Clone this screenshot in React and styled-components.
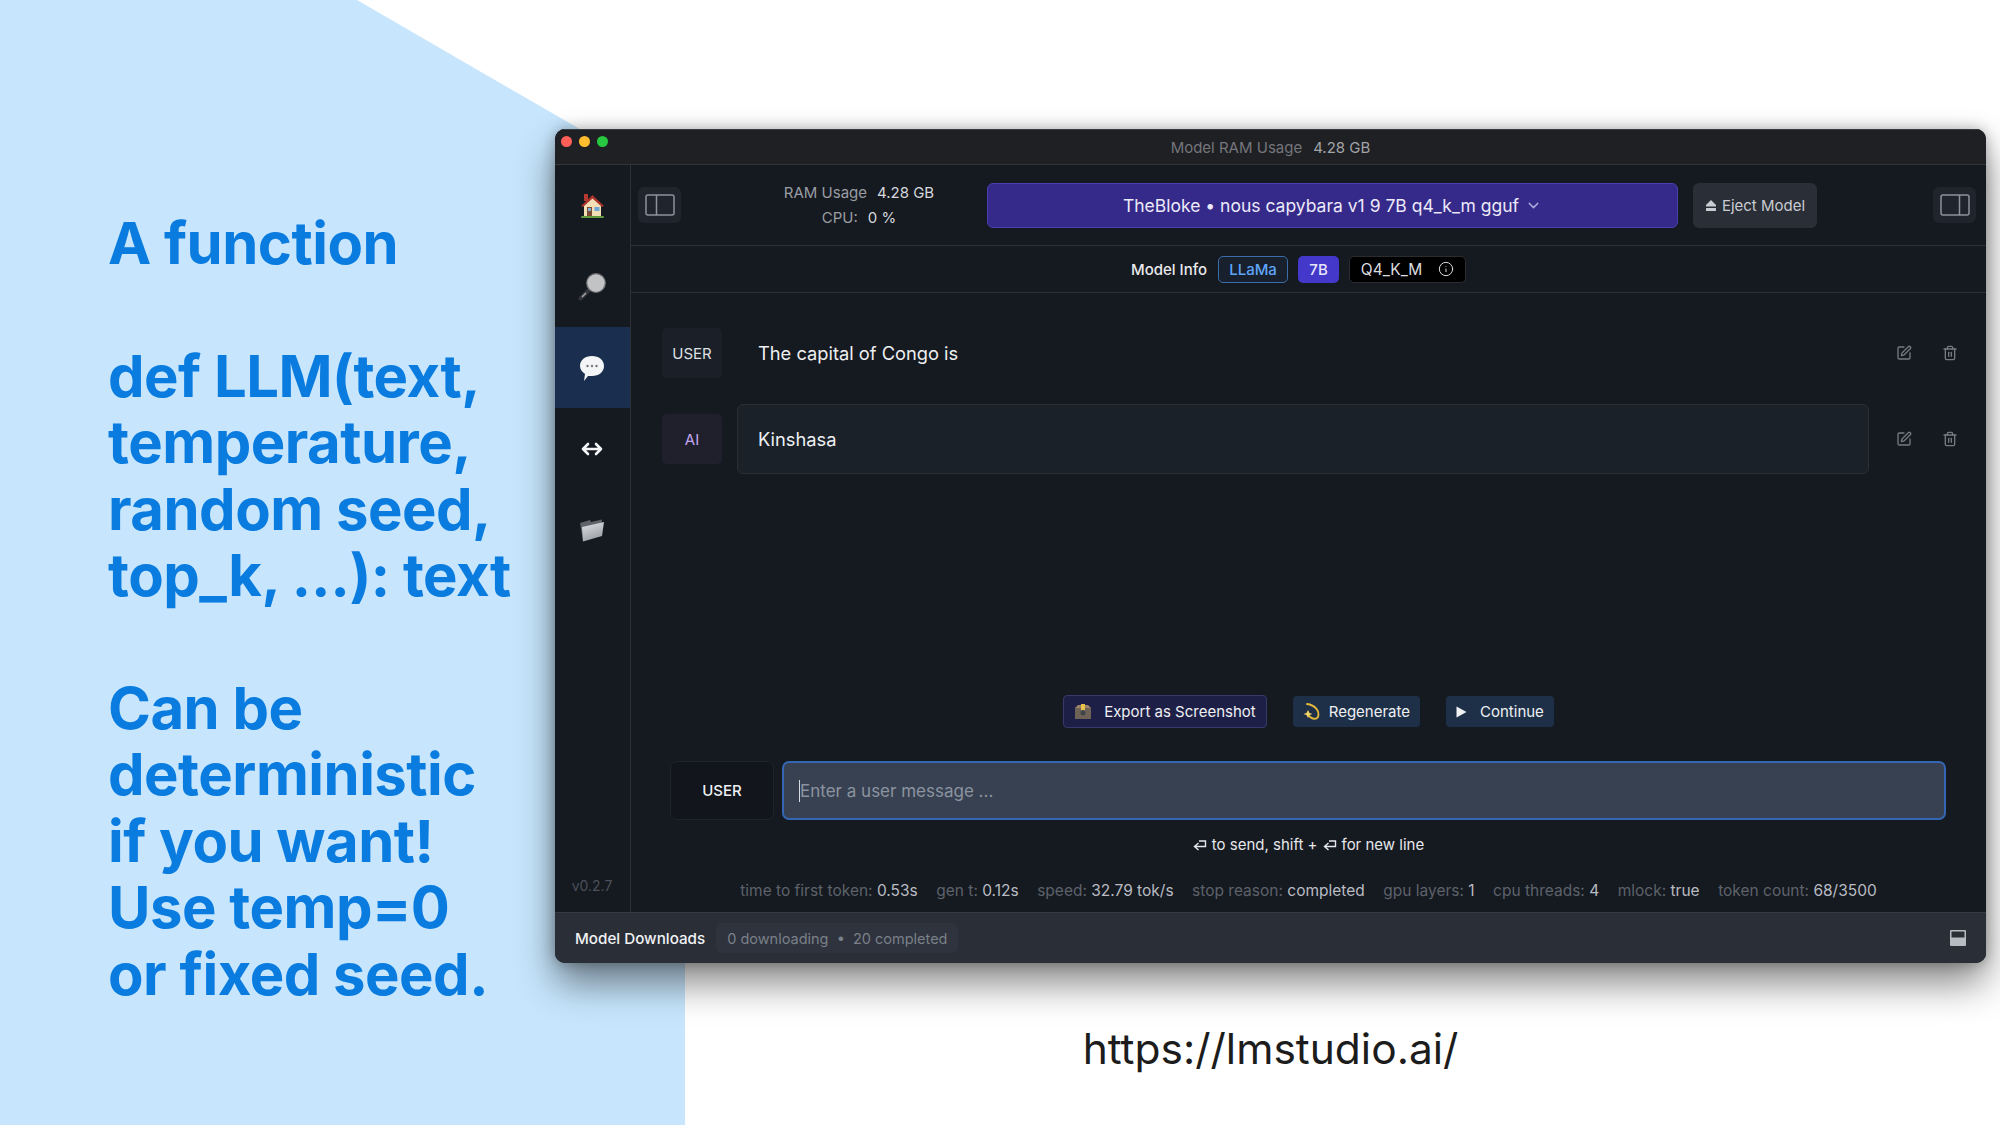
import React from 'react'
import styled, { createGlobalStyle } from 'styled-components'
import { ChevronDown, Info, SquarePen, Trash2 } from 'lucide-react'

const GlobalStyle = createGlobalStyle`
    html, body {
        margin: 0;
        padding: 0;
        background: #fff;
    }
    * {
        box-sizing: border-box;
    }
`

const HomeIcon = () => (
    <svg width="25" height="26" viewBox="0 0 25 26">
        <rect x="4" y="1" width="4" height="7" fill="#b5382f" />
        <path d="M4 11 L12.500 4 L21 11 V23 H4 Z" fill="#f3dfb6" />
        <path d="M1 13 L12.500 2 L24 13 L22 14 L12.500 5.500 L3 14 Z" fill="#a8342c" />
        <rect x="7" y="14" width="5" height="10" fill="#7c4a32" />
        <rect x="8" y="15" width="3" height="3" fill="#7fb2d8" />
        <rect x="14.500" y="14" width="5" height="4" fill="#6fa8d6" />
        <rect x="1" y="23" width="23" height="2" rx="1" fill="#5f9a3f" />
    </svg>
)

const SearchIcon = () => (
    <svg width="28" height="28" viewBox="0 0 28 28">
        <path d="M11 17 L2.500 25.500" stroke="#34363b" strokeWidth="4" strokeLinecap="round" />
        <path d="M8 20 L4 24" stroke="#a3a6ab" strokeWidth="1.500" />
        <circle cx="18" cy="10" r="9.300" fill="#c2c3c5" stroke="#6f7174" strokeWidth="1.200" />
    </svg>
)

const ChatIcon = () => (
    <svg width="26" height="28" viewBox="0 0 26 28">
        <path d="M13 2 C20 2 25 6 25 12 C25 18 20 22 13 22 L9 22 L5 27 L6 20 C3 18 1 15 1 12 C1 6 6 2 13 2 Z" fill="#f4f5f6" />
        <circle cx="8.500" cy="12" r="1.200" fill="#777" />
        <circle cx="13" cy="12" r="1.200" fill="#777" />
        <circle cx="17.500" cy="12" r="1.200" fill="#777" />
    </svg>
)

const SwapIcon = () => (
    <svg width="22" height="14" viewBox="0 0 22 14" fill="none" stroke="#f4f5f6" strokeWidth="2.600" strokeLinecap="round" strokeLinejoin="round">
        <path d="M2.500 7 H19.500 M7 2 L2 7 L7 12 M15 2 L20 7 L15 12" />
    </svg>
)

const FolderIcon = () => (
    <svg width="26" height="24" viewBox="0 0 26 24">
        <defs>
            <linearGradient id="folderFront" x1="0" y1="0" x2="0.400" y2="1">
                <stop offset="0" stopColor="#dfe2e5" />
                <stop offset="1" stopColor="#9da1a6" />
            </linearGradient>
        </defs>
        <path d="M1 5 L11 2 L12 4 L23 1.500 L22 12 L4 23 Z" fill="#5f6368" />
        <path d="M3 9 L25 4 L23 18 L4 23.500 Z" fill="url(#folderFront)" />
    </svg>
)

const PanelIcon = ({ side }) => (
    <svg width="30" height="22" viewBox="0 0 30 22" fill="none" stroke="#8d929b" strokeWidth="1.500">
        <rect x="1" y="1" width="28" height="20" rx="2" />
        <path d={side === 'left' ? 'M11.500 1 V21' : 'M19.500 1 V21'} />
    </svg>
)

const EjectIcon = () => (
    <svg width="12" height="13" viewBox="0 0 12 13" fill="#c9ccd2">
        <path d="M6 1 L11 6 V7.500 H1 V6 Z" />
        <rect x="1" y="9" width="10" height="3" rx="0.500" />
    </svg>
)

const BoxIcon = () => (
    <svg width="18" height="17" viewBox="0 0 18 17">
        <rect x="1" y="5" width="16" height="11" fill="#6d6255" />
        <path d="M1 5 L4 2 H14 L17 5 Z" fill="#9b8468" />
        <rect x="7" y="1" width="4" height="6" fill="#e8c24a" />
        <circle cx="9" cy="10" r="2.500" fill="#3f434b" />
    </svg>
)

const SparkIcon = () => (
    <svg width="18" height="19" viewBox="0 0 18 19" fill="none">
        <path d="M4 2 C12 3 17 9 15 15 C13 18 9 17 6 14" stroke="#e6b93a" strokeWidth="1.800" strokeLinecap="round" />
        <path d="M5 8 L6.500 11 L9.500 12 L6.500 13 L5 16 L3.500 13 L0.500 12 L3.500 11 Z" fill="#f2d568" />
    </svg>
)

const PlayIcon = () => (
    <svg width="11" height="12" viewBox="0 0 11 12" fill="#f0f1f3">
        <path d="M0.500 0.500 L10.500 6 L0.500 11.500 Z" />
    </svg>
)

const ReturnIcon = () => (
    <svg width="14" height="13" viewBox="0 0 14 13" fill="none" stroke="#e5e7eb" strokeWidth="1.400">
        <path d="M6 2 H12.500 V7.500 H2 M5.500 4 L1.500 7.500 L5.500 11" />
    </svg>
)

const DockIcon = () => (
    <svg width="16" height="16" viewBox="0 0 16 16">
        <rect width="16" height="16" rx="1" fill="#b8bcc2" />
        <rect x="1.500" y="1.500" width="13" height="6" fill="#2a2e37" />
    </svg>
)

const navItems = [
    { icon: <HomeIcon /> },
    { icon: <SearchIcon /> },
    { icon: <ChatIcon />, active: true },
    { icon: <SwapIcon /> },
    { icon: <FolderIcon /> },
]

const stats = [
    ['time to first token:', '0.53s'],
    ['gen t:', '0.12s'],
    ['speed:', '32.79 tok/s'],
    ['stop reason:', 'completed'],
    ['gpu layers:', '1'],
    ['cpu threads:', '4'],
    ['mlock:', 'true'],
    ['token count:', '68/3500'],
]

function App() {
    return (
        <Slide>
            <GlobalStyle />
            <BluePanel>
                <Heading>A function</Heading>
                <Heading>def LLM(text,<br />temperature,<br />random seed,<br />top_k, …): text</Heading>
                <Heading>Can be<br />deterministic<br />if you want!<br />Use temp=0<br />or fixed seed.</Heading>
            </BluePanel>

            <Stage>
                <Window>
                    <TitleBar>
                        <Lights>
                            <Light color="#ff5f57" />
                            <Light color="#febc2e" />
                            <Light color="#28c840" />
                        </Lights>
                        <TitleLabel>Model RAM Usage</TitleLabel>
                        <TitleValue>4.28 GB</TitleValue>
                    </TitleBar>

                    <Body>
                        <Sidebar>
                            {navItems.map((item, i) => (
                                <NavItem key={i} active={item.active}>{item.icon}</NavItem>
                            ))}
                            <Version>v0.2.7</Version>
                        </Sidebar>

                        <Main>
                            <Header>
                                <ToggleButton><PanelIcon side="left" /></ToggleButton>
                                <Usage>
                                    <UsageLine><span>RAM Usage</span><b>4.28 GB</b></UsageLine>
                                    <UsageLine><span>CPU:</span><b>0 %</b></UsageLine>
                                </Usage>
                                <ModelButton>
                                    TheBloke • nous capybara v1 9 7B q4_k_m gguf
                                    <ChevronDown size={17} color="#a9a6d8" />
                                </ModelButton>
                                <EjectButton><EjectIcon />Eject Model</EjectButton>
                                <RightToggle><PanelIcon side="right" /></RightToggle>
                            </Header>

                            <InfoRow>
                                <InfoLabel>Model Info</InfoLabel>
                                <ArchTag>LLaMa</ArchTag>
                                <SizeTag>7B</SizeTag>
                                <QuantTag>Q4_K_M<Info size={16} strokeWidth={1.5} /></QuantTag>
                            </InfoRow>

                            <Chat>
                                <Message>
                                    <RoleBadge>USER</RoleBadge>
                                    <MessageText>The capital of Congo is</MessageText>
                                    <MessageActions>
                                        <SquarePen size={16} />
                                        <Trash2 size={16} />
                                    </MessageActions>
                                </Message>
                                <Message boxed>
                                    <RoleBadge ai>AI</RoleBadge>
                                    <MessageText boxed>Kinshasa</MessageText>
                                    <MessageActions>
                                        <SquarePen size={16} />
                                        <Trash2 size={16} />
                                    </MessageActions>
                                </Message>
                            </Chat>

                            <ActionRow>
                                <ActionButton export gap="12px"><BoxIcon />Export as Screenshot</ActionButton>
                                <ActionButton gap="8px"><SparkIcon />Regenerate</ActionButton>
                                <ActionButton gap="13px"><PlayIcon />Continue</ActionButton>
                            </ActionRow>

                            <InputRow>
                                <InputRole>USER</InputRole>
                                <InputBox><Caret />Enter a user message ...</InputBox>
                            </InputRow>

                            <Hint><ReturnIcon /> to send, shift + <ReturnIcon /> for new line</Hint>

                            <Stats>
                                {stats.map(([label, value]) => (
                                    <Stat key={label}>{label} <b>{value}</b></Stat>
                                ))}
                            </Stats>
                        </Main>
                    </Body>

                    <Footer>
                        <FooterTitle>Model Downloads</FooterTitle>
                        <FooterPill>0 downloading  •  20 completed</FooterPill>
                        <FooterDock><DockIcon /></FooterDock>
                    </Footer>
                </Window>
                <SiteLink>https://lmstudio.ai/</SiteLink>
            </Stage>
        </Slide>
    )
}

export default App

const Slide = styled.div`
    width: 2000px;
    height: 1125px;
    overflow: hidden;
    display: grid;
    grid-template-columns: 555px 130px 1fr;
    grid-template-rows: 1fr;
    background: #fff;
    font-family: Inter, "Liberation Sans", sans-serif;
`

const BluePanel = styled.div`
    grid-column: 1 / 3;
    grid-row: 1;
    background: #c7e6fd;
    clip-path: polygon(0 0, 357px 0, 685px 190px, 685px 100%, 0 100%);
    padding: 210px 0 0 108px;
    display: flex;
    flex-direction: column;
    gap: 66px;
`

const Heading = styled.div`
    font-family: Inter, "Liberation Sans", sans-serif;
    font-size: 58px;
    font-weight: 700;
    line-height: 66.500px;
    letter-spacing: -0.500px;
    color: #0a7ce0;
    white-space: nowrap;
`

const Stage = styled.div`
    grid-column: 2 / 4;
    grid-row: 1;
    z-index: 1;
    padding: 129px 14px 0 0;
    display: flex;
    flex-direction: column;
`

const Window = styled.div`
    height: 834px;
    display: flex;
    flex-direction: column;
    border-radius: 10px;
    overflow: hidden;
    background: #151920;
    box-shadow: 0 20px 38px rgba(0, 0, 0, 0.48), 0 0 14px rgba(0, 0, 0, 0.28);
    color: #e5e7eb;
`

const TitleBar = styled.div`
    height: 36px;
    flex: none;
    position: relative;
    display: flex;
    align-items: center;
    justify-content: center;
    gap: 11px;
    padding-top: 1px;
    background: #1f2024;
    border-bottom: 1px solid #33353a;
    border-top: 1px solid #3a3b3f;
    font-size: 15px;
`

const Lights = styled.div`
    position: absolute;
    left: 6px;
    top: 6px;
    display: flex;
    gap: 7px;
`

const Light = styled.div`
    width: 11px;
    height: 11px;
    border-radius: 50%;
    background: ${props => props.color};
`

const TitleLabel = styled.span`
    color: #74767b;
`

const TitleValue = styled.span`
    color: #a2a4a8;
`

const Body = styled.div`
    flex: 1;
    min-height: 0;
    display: flex;
`

const Sidebar = styled.div`
    width: 76px;
    flex: none;
    display: flex;
    flex-direction: column;
    border-right: 1px solid #2d3036;
`

const NavItem = styled.div`
    height: 81px;
    flex: none;
    padding-right: 1px;
    display: flex;
    align-items: center;
    justify-content: center;
    background: ${props => props.active ? '#1a2f4f' : 'transparent'};
`

const Version = styled.div`
    margin-top: auto;
    padding: 0 1px 18px 0;
    text-align: center;
    font-size: 14px;
    color: #4b5059;
`

const Main = styled.div`
    flex: 1;
    min-width: 0;
    display: flex;
    flex-direction: column;
`

const Header = styled.div`
    height: 81px;
    flex: none;
    display: flex;
    align-items: center;
    padding: 0 10px 0 7px;
    border-bottom: 1px solid #2d3036;
`

const ToggleButton = styled.div`
    width: 43px;
    height: 36px;
    display: flex;
    align-items: center;
    justify-content: center;
    border-radius: 6px;
    background: #20242c;
`

const RightToggle = styled(ToggleButton)`
    margin-left: auto;
`

const Usage = styled.div`
    width: 152px;
    margin: 0 52px 0 102px;
    display: flex;
    flex-direction: column;
    align-items: center;
    gap: 7px;
    font-size: 15px;
    line-height: 18px;
`

const UsageLine = styled.div`
    display: flex;
    gap: 10px;
    white-space: nowrap;
    span {
        color: #9a9da3;
    }
    b {
        font-weight: 400;
        color: #d6d8dc;
    }
`

const ModelButton = styled.div`
    width: 691px;
    height: 45px;
    flex: none;
    display: flex;
    align-items: center;
    justify-content: center;
    gap: 6px;
    border-radius: 6px;
    border: 1px solid #4a3fae;
    background: #35298a;
    color: #eceaf8;
    font-size: 17.500px;
`

const EjectButton = styled.div`
    width: 124px;
    height: 45px;
    flex: none;
    margin-left: 15px;
    display: flex;
    align-items: center;
    justify-content: center;
    gap: 5px;
    border-radius: 6px;
    background: #2a2e37;
    color: #c9ccd2;
    font-size: 15px;
`

const InfoRow = styled.div`
    height: 47px;
    flex: none;
    display: flex;
    align-items: center;
    justify-content: center;
    gap: 10px;
    padding-right: 20px;
    border-bottom: 1px solid #2d3036;
    font-size: 15px;
`

const InfoLabel = styled.span`
    margin-right: 1px;
    font-weight: 500;
    color: #e8e9ec;
`

const Tag = styled.span`
    height: 27px;
    display: flex;
    align-items: center;
    justify-content: center;
    border-radius: 5px;
    font-weight: 500;
`

const ArchTag = styled(Tag)`
    width: 70px;
    border: 1px solid #3b6ea8;
    background: #17202c;
    color: #60a5fa;
`

const SizeTag = styled(Tag)`
    width: 41px;
    background: #4338ca;
    color: #e6e6fb;
`

const QuantTag = styled(Tag)`
    width: 117px;
    gap: 16px;
    font-weight: 400;
    font-size: 15.500px;
    border: 1px solid #2b2c30;
    background: #000;
    color: #dcdde0;
`

const Chat = styled.div`
    flex: 1;
    padding: 35px 0 0 31px;
    display: flex;
    flex-direction: column;
    gap: 26px;
`

const Message = styled.div`
    height: ${props => props.boxed ? '70px' : '50px'};
    display: flex;
    align-items: center;
`

const RoleBadge = styled.div`
    width: 60px;
    height: 50px;
    flex: none;
    display: flex;
    align-items: center;
    justify-content: center;
    border-radius: 5px;
    background: ${props => props.ai ? '#1f202c' : '#1b1f27'};
    color: ${props => props.ai ? '#c4a6f0' : '#dfe1e5'};
    font-size: 15px;
`

const MessageText = styled.div`
    width: 1132px;
    height: 100%;
    margin-left: 15px;
    padding-left: 20px;
    display: flex;
    align-items: center;
    border-radius: 6px;
    border: 1px solid ${props => props.boxed ? '#2a2f36' : 'transparent'};
    background: ${props => props.boxed ? '#1a2129' : 'transparent'};
    color: #eef0f2;
    font-size: 18.300px;
`

const MessageActions = styled.div`
    margin-left: 27px;
    display: flex;
    gap: 30px;
    color: #767a81;
`

const ActionRow = styled.div`
    display: flex;
    align-items: center;
    justify-content: center;
    gap: 26px;
`

const ActionButton = styled.div`
    height: ${props => props.export ? '33px' : '31px'};
    display: flex;
    align-items: center;
    gap: ${props => props.gap};
    padding: 0 10px;
    border-radius: 4px;
    border: ${props => props.export ? '1px solid #36396a' : 'none'};
    background: ${props => props.export ? '#1e1f47' : '#1e3048'};
    color: #eef0f3;
    font-size: 15px;
`

const InputRow = styled.div`
    margin-top: 33px;
    padding: 0 40px 0 39px;
    display: flex;
    gap: 8px;
`

const InputRole = styled.div`
    width: 104px;
    height: 59px;
    flex: none;
    display: flex;
    align-items: center;
    justify-content: center;
    border-radius: 7px;
    border: 1px solid #20242b;
    background: #12151b;
    font-size: 15px;
    font-weight: 500;
    color: #eef0f3;
`

const InputBox = styled.div`
    flex: 1;
    height: 59px;
    display: flex;
    align-items: center;
    padding-left: 15px;
    border-radius: 7px;
    border: 2px solid #3565b5;
    background: #374151;
    color: #8c93a0;
    font-size: 17px;
`

const Caret = styled.span`
    width: 1px;
    height: 22px;
    background: #d8dbe0;
`

const Hint = styled.div`
    margin-top: 16px;
    display: flex;
    align-items: center;
    justify-content: center;
    gap: 5px;
    line-height: 18px;
    font-size: 15px;
    color: #e5e7eb;
`

const Stats = styled.div`
    margin-top: 28px;
    height: 30px;
    display: flex;
    justify-content: center;
    gap: 18.500px;
    font-size: 15.500px;
    line-height: 18px;
    color: #5d626b;
    white-space: nowrap;
`

const Stat = styled.span`
    b {
        font-weight: 400;
        color: #b9bcc2;
    }
`

const Footer = styled.div`
    height: 51px;
    flex: none;
    display: flex;
    align-items: center;
    padding: 0 20px;
    border-top: 1px solid #363a43;
    background: #2a2e37;
`

const FooterTitle = styled.span`
    font-size: 15.200px;
    font-weight: 500;
    color: #f1f2f4;
`

const FooterPill = styled.span`
    height: 30px;
    margin-left: 11px;
    padding: 0 11px;
    display: flex;
    align-items: center;
    border-radius: 6px;
    background: #2e333d;
    color: #7b808a;
    font-size: 14.500px;
    white-space: pre;
`

const FooterDock = styled.span`
    margin-left: auto;
    display: flex;
`

const SiteLink = styled.div`
    margin-top: 60px;
    text-align: center;
    font-size: 42.500px;
    line-height: 52px;
    color: #1c1c1c;
`
